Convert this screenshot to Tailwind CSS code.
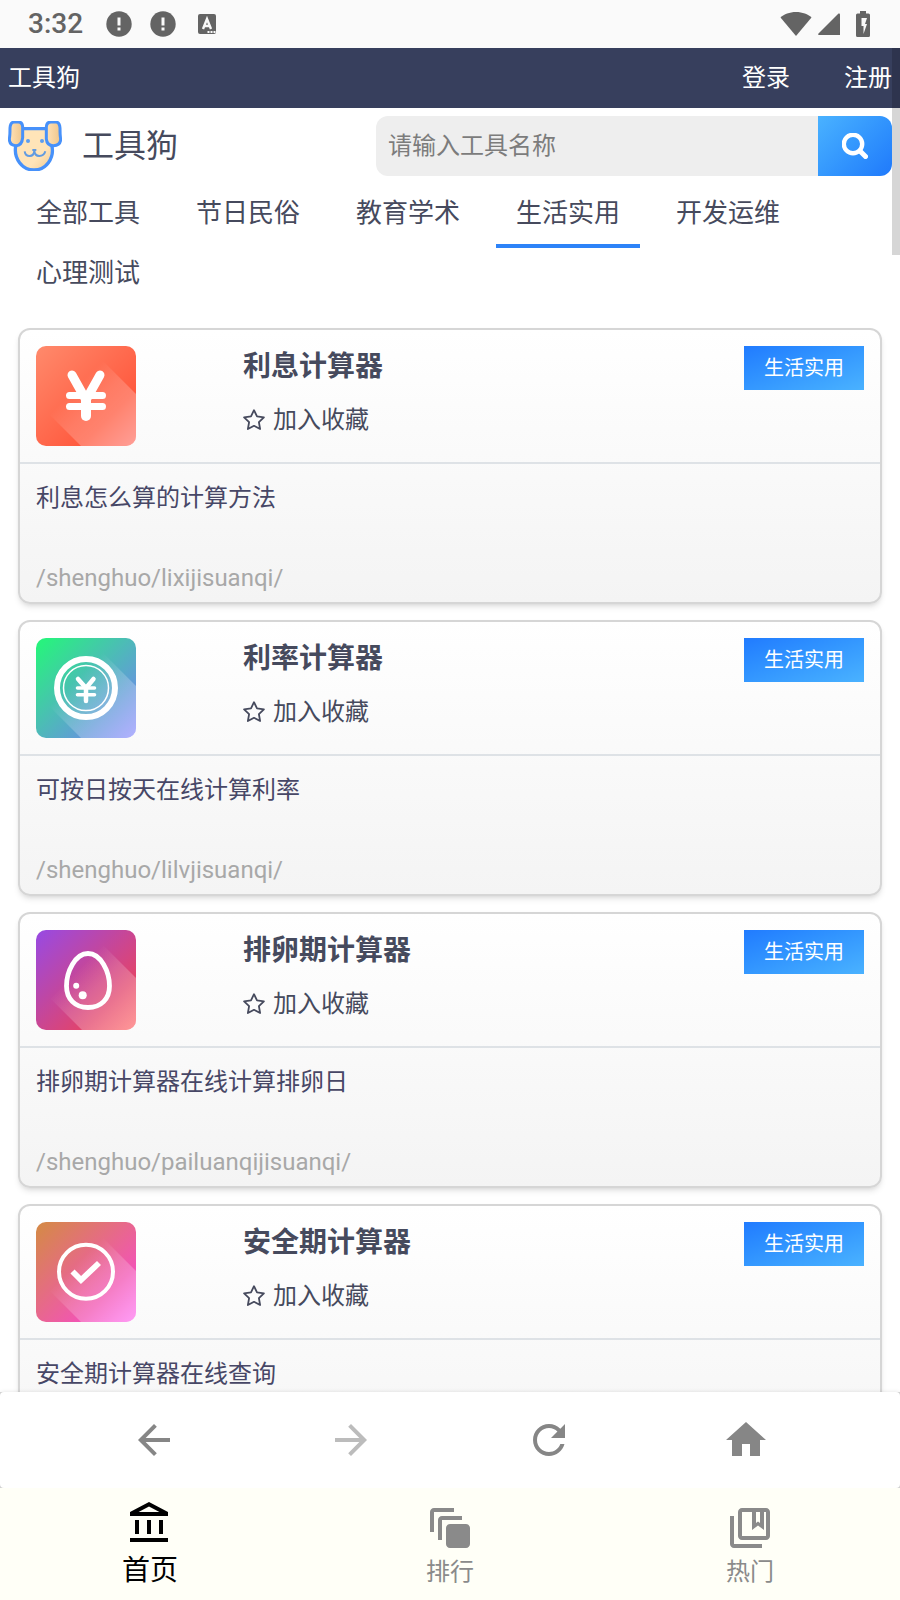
<!DOCTYPE html>
<html lang="zh-CN">
<head>
<meta charset="utf-8">
<meta name="viewport" content="width=device-width, initial-scale=1">
<title>工具狗</title>
<script src="https://cdn.jsdelivr.net/npm/@tailwindcss/browser@4"></script>
</head>
<body class="flex h-screen flex-col overflow-hidden bg-white font-[Roboto,'Noto_Sans_CJK_SC',sans-serif] text-2xl text-[#464a5d]">

<svg class="absolute size-0" aria-hidden="true">
  <defs>
    <linearGradient id="shade" x1="0.31" y1="0.31" x2="1" y2="1">
      <stop offset="0" stop-color="#fff" stop-opacity="0"/>
      <stop offset="0.3" stop-color="#fff" stop-opacity="0.16"/>
      <stop offset="1" stop-color="#fff" stop-opacity="0.42"/>
    </linearGradient>
    <symbol id="star" viewBox="0 0 22 22">
      <path d="M11 1.2l3 6.200 6.900 1-5 4.800 1.200 6.800-6.100-3.200-6.100 3.200 1.200-6.800-5-4.800 6.900-1z" fill="none" stroke="currentColor" stroke-width="1.800" stroke-linejoin="round"/>
    </symbol>
    <symbol id="alert" viewBox="0 0 26 26">
      <circle cx="13" cy="13" r="12.7" fill="currentColor"/>
      <path d="M11.5 6.5h3v8h-3zM11.5 16.5h3v3h-3z" fill="#fafafa"/>
    </symbol>
  </defs>
</svg>

<div class="flex h-12 shrink-0 items-center justify-between bg-[#fafafa] pr-[30px] pl-7 text-[#646464]">
  <div class="flex items-center">
    <span class="text-[28px] leading-[50px] font-medium">3:32</span>
    <svg class="ml-[23px] size-[26px]"><use href="#alert"/></svg>
    <svg class="ml-[18px] size-[26px]"><use href="#alert"/></svg>
    <svg class="ml-[22px] h-5 w-[18px]" viewBox="0 0 18 20">
      <rect width="18" height="20" rx="2" fill="currentColor"/>
      <path d="M5 15L9 5l4 10M6.5 12h5" fill="none" stroke="#fafafa" stroke-width="2.4"/>
      <path d="M9.500 17h2v2h-2zM12.500 17h2v2h-2zM15.500 17h2v2h-2z" fill="#fafafa"/>
    </svg>
  </div>
  <div class="flex items-center">
    <svg class="h-6 w-8" viewBox="0 0 32 24" fill="currentColor"><path d="M16 0C9.500 0 4 2.300.5 5.500L16 24 31.500 5.500C28 2.300 22.500 0 16 0z"/></svg>
    <svg class="ml-[6px] h-[22px] w-[22px]" viewBox="0 0 22 22" fill="currentColor"><path d="M20.500 0.500Q22 0 22 1.500V22H1Q-.5 21.500.5 20.500z"/></svg>
    <svg class="ml-4 h-[26px] w-[14px]" viewBox="0 0 14 26" fill="currentColor"><path fill-rule="evenodd" d="M4 0h6v2.500h2.500Q14 2.500 14 4v20.500Q14 26 12.500 26h-11Q0 26 0 24.500V4Q0 2.500 1.500 2.500H4zM5.500 7v8H7.500v8L11 13H9l2-6z"/></svg>
  </div>
</div>

<div class="relative min-h-0 flex-1 overflow-hidden">
  <nav class="flex h-[60px] items-center justify-between bg-[#373f5d] px-2 text-white" aria-label="账户">
    <a href="#">工具狗</a>
    <div class="flex gap-[54px]">
      <a href="#">登录</a>
      <a href="#">注册</a>
    </div>
  </nav>

  <header class="flex items-center justify-between p-2">
    <a href="#" class="flex items-center gap-5 text-[32px] leading-[48px]">
      <svg class="h-[50px] w-[54px]" viewBox="0 0 162 150" aria-hidden="true">
        <defs>
          <linearGradient id="ear"><stop offset="0" stop-color="#ffe2b8"/><stop offset="1" stop-color="#efc589"/></linearGradient>
          <linearGradient id="face" x1="0" y1="0" x2="1" y2="1"><stop offset=".65" stop-color="#ffe4b8"/><stop offset="1" stop-color="#f0c98f"/></linearGradient>
        </defs>
        <path d="M42 23H116L132 76C139 112 114 147 78 147S17 112 23 76z" fill="url(#face)" stroke="#4791fa" stroke-width="10"/>
        <path d="M18 3H31Q43 3 44 18V50Q42 74 24 74Q4 73 4 54Q6 44 6 21Q7 4 18 3z" fill="url(#ear)" stroke="#4791fa" stroke-width="9"/>
        <path d="M144 3H129Q116 3 115 18V54Q117 74 136 74Q158 73 158 54Q156 44 156 21Q155 4 144 3z" fill="url(#ear)" stroke="#4791fa" stroke-width="9"/>
        <circle cx="60" cy="60" r="6" fill="#5c9df0"/><circle cx="102" cy="60" r="6" fill="#5c9df0"/>
        <path d="M50 91Q52 105 65 105T79 89Q80 105 94 105T112 91M73 87h12" fill="none" stroke="#629be0" stroke-width="6"/>
      </svg>
      工具狗
    </a>
    <form class="flex h-[60px] w-[516px] overflow-hidden rounded-xl" onsubmit="return false">
      <input type="text" aria-label="请输入工具名称" placeholder="请输入工具名称" class="min-w-0 flex-1 bg-[#eeeeee] px-3 outline-none placeholder:text-[#7c7c7c]">
      <button type="submit" aria-label="搜索" class="flex w-[74px] items-center justify-center bg-linear-135 from-[#4ab2ff] to-[#2079fb]">
        <svg class="size-[26px]" viewBox="0 0 26 26" fill="none" stroke="#fff" stroke-linecap="round"><circle cx="11" cy="11" r="9.200" stroke-width="4.400"/><path d="M18 18l5.500 5.500" stroke-width="5"/></svg>
      </button>
    </form>
  </header>

  <nav class="mt-1 flex flex-wrap gap-x-4 px-4 text-[26px] leading-[50px]" aria-label="分类">
    <a href="#" class="w-36 border-b-4 border-transparent pb-[6px] text-center">全部工具</a>
    <a href="#" class="w-36 border-b-4 border-transparent pb-[6px] text-center">节日民俗</a>
    <a href="#" class="w-36 border-b-4 border-transparent pb-[6px] text-center">教育学术</a>
    <a href="#" class="w-36 border-b-4 border-[#2d83f8] pb-[6px] text-center" aria-current="page">生活实用</a>
    <a href="#" class="w-36 border-b-4 border-transparent pb-[6px] text-center">开发运维</a>
    <a href="#" class="w-36 border-b-4 border-transparent pb-[6px] text-center">心理测试</a>
  </nav>

  <main class="mt-5 flex flex-col gap-4 px-[18px]">
    <article class="rounded-xl border-2 border-[#d6d6d6] bg-linear-to-b from-white to-[#f4f4f4] shadow-md">
      <div class="flex items-start border-b-2 border-[#dee2e6] p-4">
        <div class="w-1/4">
          <svg class="size-[100px] rounded-[10px]" viewBox="0 0 100 100" aria-hidden="true">
            <linearGradient id="g1" x1="0" y1="0" x2="1" y2="1"><stop offset="0" stop-color="#ff8a6c"/><stop offset=".72" stop-color="#ff5a3f"/><stop offset="1" stop-color="#ff5a4c"/></linearGradient>
            <rect width="100" height="100" fill="url(#g1)"/>
            <path d="M66 14L100 48V100H45L14 69z" fill="url(#shade)"/>
            <g fill="none" stroke="#fff" stroke-linecap="round"><path d="M36 29L50 54L64 29" stroke-width="9"/><path d="M50 54V70" stroke-width="10"/><path d="M33.500 49.500H66.500M33.500 60.500H66.500" stroke-width="7"/></g>
          </svg>
        </div>
        <div class="flex-1">
          <h2 class="text-[28px] leading-[42px] font-bold">利息计算器</h2>
          <button type="button" class="mt-[14px] flex items-center gap-2 leading-9"><svg class="size-[22px]"><use href="#star"/></svg>加入收藏</button>
        </div>
        <span class="bg-linear-to-br from-[#217bff] to-[#4ab2ff] px-5 text-xl leading-[44px] text-white">生活实用</span>
      </div>
      <div class="px-4 pt-4 pb-[6px]">
        <p class="mb-11 leading-9 text-[#474766]">利息怎么算的计算方法</p>
        <a href="#" class="block leading-9 text-[#a8a8a8]">/shenghuo/lixijisuanqi/</a>
      </div>
    </article>

    <article class="rounded-xl border-2 border-[#d6d6d6] bg-linear-to-b from-white to-[#f4f4f4] shadow-md">
      <div class="flex items-start border-b-2 border-[#dee2e6] p-4">
        <div class="w-1/4">
          <svg class="size-[100px] rounded-[10px]" viewBox="0 0 100 100" aria-hidden="true">
            <linearGradient id="g2" x1="0" y1="0" x2="1" y2="1"><stop offset="0.050" stop-color="#28f27e"/><stop offset=".72" stop-color="#629bd8"/><stop offset="1" stop-color="#7a78ff"/></linearGradient>
            <rect width="100" height="100" fill="url(#g2)"/>
            <path d="M66 14L100 48V100H45L14 69z" fill="url(#shade)"/>
            <circle cx="50" cy="50" r="29" fill="none" stroke="#fff" stroke-width="6"/>
            <circle cx="50" cy="50" r="22.500" fill="none" stroke="#fff" stroke-width="1.500"/>
            <g fill="none" stroke="#fff" stroke-linecap="round"><path d="M42 41L50 50L57.500 41" stroke-width="4.500"/><path d="M50 50V63" stroke-width="4.500"/><path d="M41.500 50H58.500M41.500 56.700H58.500" stroke-width="3.600"/></g>
          </svg>
        </div>
        <div class="flex-1">
          <h2 class="text-[28px] leading-[42px] font-bold">利率计算器</h2>
          <button type="button" class="mt-[14px] flex items-center gap-2 leading-9"><svg class="size-[22px]"><use href="#star"/></svg>加入收藏</button>
        </div>
        <span class="bg-linear-to-br from-[#217bff] to-[#4ab2ff] px-5 text-xl leading-[44px] text-white">生活实用</span>
      </div>
      <div class="px-4 pt-4 pb-[6px]">
        <p class="mb-11 leading-9 text-[#474766]">可按日按天在线计算利率</p>
        <a href="#" class="block leading-9 text-[#a8a8a8]">/shenghuo/lilvjisuanqi/</a>
      </div>
    </article>

    <article class="rounded-xl border-2 border-[#d6d6d6] bg-linear-to-b from-white to-[#f4f4f4] shadow-md">
      <div class="flex items-start border-b-2 border-[#dee2e6] p-4">
        <div class="w-1/4">
          <svg class="size-[100px] rounded-[10px]" viewBox="0 0 100 100" aria-hidden="true">
            <linearGradient id="g3" x1="0" y1="0" x2="1" y2="1"><stop offset="0" stop-color="#974ae4"/><stop offset=".74" stop-color="#e3446a"/><stop offset="1" stop-color="#ff4d4d"/></linearGradient>
            <rect width="100" height="100" fill="url(#g3)"/>
            <path d="M66 14L100 48V100H46L14 68z" fill="url(#shade)"/>
            <path d="M52 23.500C65 23.500 73.500 42 73.500 56C73.500 69 65 77.500 52 77.500S30.500 69 30.500 56C30.500 42 39 23.500 52 23.500z" fill="none" stroke="#fff" stroke-width="4.800"/>
            <circle cx="40.200" cy="55.700" r="3" fill="#fff"/><circle cx="46.700" cy="65.300" r="4" fill="#fff"/>
          </svg>
        </div>
        <div class="flex-1">
          <h2 class="text-[28px] leading-[42px] font-bold">排卵期计算器</h2>
          <button type="button" class="mt-[14px] flex items-center gap-2 leading-9"><svg class="size-[22px]"><use href="#star"/></svg>加入收藏</button>
        </div>
        <span class="bg-linear-to-br from-[#217bff] to-[#4ab2ff] px-5 text-xl leading-[44px] text-white">生活实用</span>
      </div>
      <div class="px-4 pt-4 pb-[6px]">
        <p class="mb-11 leading-9 text-[#474766]">排卵期计算器在线计算排卵日</p>
        <a href="#" class="block leading-9 text-[#a8a8a8]">/shenghuo/pailuanqijisuanqi/</a>
      </div>
    </article>

    <article class="rounded-xl border-2 border-[#d6d6d6] bg-linear-to-b from-white to-[#f4f4f4] shadow-md">
      <div class="flex items-start border-b-2 border-[#dee2e6] p-4">
        <div class="w-1/4">
          <svg class="size-[100px] rounded-[10px]" viewBox="0 0 100 100" aria-hidden="true">
            <linearGradient id="g4" x1="0" y1="0" x2="1" y2="1"><stop offset="0.050" stop-color="#d6874b"/><stop offset=".72" stop-color="#f255b4"/><stop offset="1" stop-color="#ff55ee"/></linearGradient>
            <rect width="100" height="100" fill="url(#g4)"/>
            <path d="M66 15L100 49V100H45L14 69z" fill="url(#shade)"/>
            <circle cx="50" cy="49.700" r="27" fill="none" stroke="#fff" stroke-width="4"/>
            <path d="M36.500 49.500L45 58L63 41" fill="none" stroke="#fff" stroke-width="5.800"/>
          </svg>
        </div>
        <div class="flex-1">
          <h2 class="text-[28px] leading-[42px] font-bold">安全期计算器</h2>
          <button type="button" class="mt-[14px] flex items-center gap-2 leading-9"><svg class="size-[22px]"><use href="#star"/></svg>加入收藏</button>
        </div>
        <span class="bg-linear-to-br from-[#217bff] to-[#4ab2ff] px-5 text-xl leading-[44px] text-white">生活实用</span>
      </div>
      <div class="min-h-[138px] px-4 pt-4 pb-[6px]">
        <p class="leading-9 text-[#474766]">安全期计算器在线查询</p>
      </div>
    </article>
  </main>

  <div class="absolute top-0 right-0 h-[207px] w-2 bg-black/16"></div>
</div>

<div class="z-10 shrink-0 bg-[#d8d8d8]">
  <div class="flex h-24 items-center rounded bg-white px-[55px] text-[#868686] shadow-[0_0_4px_rgba(0,0,0,0.12)]" role="toolbar" aria-label="浏览">
    <button type="button" class="flex flex-1 justify-center" aria-label="后退"><svg class="size-12" viewBox="0 0 24 24" fill="currentColor"><path d="M20 11H7.830l5.590-5.590L12 4l-8 8 8 8 1.410-1.410L7.830 13H20v-2z"/></svg></button>
    <button type="button" class="flex flex-1 justify-center text-[#bcbcbc]" aria-label="前进"><svg class="size-12" viewBox="0 0 24 24" fill="currentColor"><path d="M12 4l-1.410 1.410L16.170 11H4v2h12.170l-5.580 5.590L12 20l8-8z"/></svg></button>
    <button type="button" class="flex flex-1 justify-center" aria-label="刷新"><svg class="size-12" viewBox="0 0 24 24" fill="currentColor"><path d="M17.650 6.350C16.200 4.900 14.210 4 12 4c-4.420 0-7.990 3.580-7.990 8s3.570 8 7.990 8c3.730 0 6.840-2.550 7.730-6h-2.080c-.82 2.330-3.040 4-5.650 4-3.310 0-6-2.690-6-6s2.690-6 6-6c1.660 0 3.140.69 4.220 1.780L13 11h7V4l-2.350 2.350z"/></svg></button>
    <button type="button" class="flex flex-1 justify-center" aria-label="主页"><svg class="size-12" viewBox="0 0 24 24" fill="currentColor"><path d="M10 20v-6h4v6h5v-8h3L12 3 2 12h3v8z"/></svg></button>
  </div>
</div>

<nav class="z-20 grid h-28 shrink-0 grid-cols-3 bg-[#fffff7] text-[#8a8a8a]" aria-label="主导航">
  <a href="#" class="flex flex-col items-center pt-3 text-[28px] leading-[46px] text-black" aria-current="page">
    <svg class="size-12" viewBox="0 0 24 24" fill="currentColor"><path d="M6.500 10h-2v7h2v-7zm6 0h-2v7h2v-7zm8.500 9H2v2h19v-2zm-2.500-9h-2v7h2v-7zm-7-6.740L16.710 6H6.290l5.210-2.740m0-2.260L2 6v2h19V6l-9.500-5z"/></svg>
    首页
  </a>
  <a href="#" class="flex flex-col items-center pt-4 leading-10">
    <svg class="size-12" viewBox="0 0 24 24" fill="currentColor"><path d="M14 2H4c-1.110 0-2 .9-2 2v10h2V4h10V2zm4 4H8c-1.110 0-2 .9-2 2v10h2V8h10V6zm2 4h-8c-1.110 0-2 .9-2 2v8c0 1.100.89 2 2 2h8c1.100 0 2-.9 2-2v-8c0-1.100-.9-2-2-2z"/></svg>
    排行
  </a>
  <a href="#" class="flex flex-col items-center pt-4 leading-10">
    <svg class="size-12" viewBox="0 0 24 24" fill="currentColor"><path d="M4 6H2v14c0 1.100.9 2 2 2h14v-2H4V6zM20 2H8c-1.100 0-2 .9-2 2v12c0 1.100.9 2 2 2h12c1.100 0 2-.9 2-2V4c0-1.100-.9-2-2-2zm0 14H8V4h12v12z"/><path d="M13 4v9l3-2.250L19 13V4h-2v5.500l-1-.75-1 .75V4z"/></svg>
    热门
  </a>
</nav>
</body>
</html>
